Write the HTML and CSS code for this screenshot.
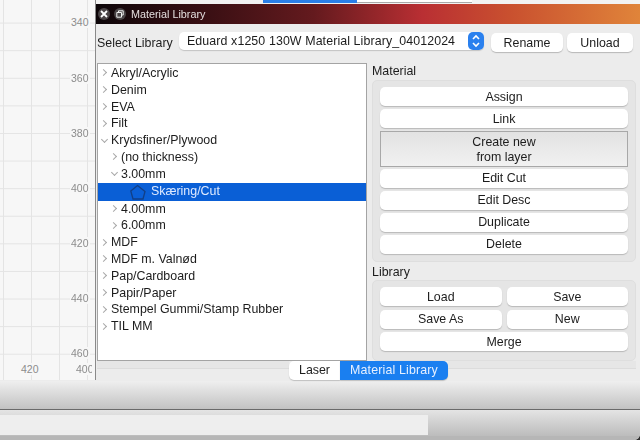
FILE: index.html
```html
<!DOCTYPE html>
<html lang="en">
<head>
    <meta charset="UTF-8">
    <title>Material Library</title>
    <link rel="stylesheet" href="styles.css">
</head>
<body>
    <div class="topstrip">
        <span class="toptab-blue"></span>
        <span class="toptab-white"></span>
    </div>

    <div class="main">
        <div class="canvas">
            <span class="rule-y" style="top:16px">340</span>
            <span class="rule-y" style="top:72px">360</span>
            <span class="rule-y" style="top:127px">380</span>
            <span class="rule-y" style="top:182px">400</span>
            <span class="rule-y" style="top:237px">420</span>
            <span class="rule-y" style="top:292px">440</span>
            <span class="rule-y" style="top:347px">460</span>
            <span class="rule-x" style="left:20px">420</span>
            <span class="rule-x rule-clip" style="left:75px">400</span>
        </div>

        <div class="window">
            <div class="titlebar">
                <span class="winbtn">
                    <svg width="8" height="8" viewBox="0 0 8 8"><path d="M1 1L7 7M7 1L1 7" stroke="#fff" stroke-width="1.8"/></svg>
                </span>
                <span class="winbtn">
                    <svg width="8" height="8" viewBox="0 0 8 8"><path d="M2.5 2V.8H7.2V5H6M.8 2.5H5.5V7.2H.8Z" fill="none" stroke="#eee" stroke-width="1"/></svg>
                </span>
                <span class="wintitle">Material Library</span>
            </div>

            <div class="libbar">
                <span class="liblabel">Select Library</span>
                <div class="select">
                    <span class="select-text">Eduard x1250 130W Material Library_04012024</span>
                    <span class="stepper">
                        <svg width="10" height="14" viewBox="0 0 10 14"><path d="M2 5L5 2L8 5M2 9L5 12L8 9" fill="none" stroke="#fff" stroke-width="1.6"/></svg>
                    </span>
                </div>
                <button class="btn btn-rename">Rename</button>
                <button class="btn btn-unload">Unload</button>
            </div>

            <div class="content">
                <div class="tree">
                    <div class="row"><i class="arrow"></i>Akryl/Acrylic</div>
                    <div class="row"><i class="arrow"></i>Denim</div>
                    <div class="row"><i class="arrow"></i>EVA</div>
                    <div class="row"><i class="arrow"></i>Filt</div>
                    <div class="row"><i class="arrow open"></i>Krydsfiner/Plywood</div>
                    <div class="row sub"><i class="arrow"></i>(no thickness)</div>
                    <div class="row sub"><i class="arrow open"></i>3.00mm</div>
                    <div class="row selected">
                        <svg class="cut-icon" width="16" height="16" viewBox="0 0 16 16"><path d="M7.5 1.5L15 7.5L13 15H3L.8 7Z" fill="none" stroke="#123f86" stroke-width="1.3"/></svg>
                        Skæring/Cut
                    </div>
                    <div class="row sub"><i class="arrow"></i>4.00mm</div>
                    <div class="row sub"><i class="arrow"></i>6.00mm</div>
                    <div class="row"><i class="arrow"></i>MDF</div>
                    <div class="row"><i class="arrow"></i>MDF m. Valnød</div>
                    <div class="row"><i class="arrow"></i>Pap/Cardboard</div>
                    <div class="row"><i class="arrow"></i>Papir/Paper</div>
                    <div class="row"><i class="arrow"></i>Stempel Gummi/Stamp Rubber</div>
                    <div class="row"><i class="arrow"></i>TIL MM</div>
                </div>

                <div class="side">
                    <div class="grouplabel">Material</div>
                    <div class="group group-material">
                        <button class="btn">Assign</button>
                        <button class="btn">Link</button>
                        <button class="btn-flat">Create new<br>from layer</button>
                        <button class="btn">Edit Cut</button>
                        <button class="btn">Edit Desc</button>
                        <button class="btn">Duplicate</button>
                        <button class="btn">Delete</button>
                    </div>
                    <div class="grouplabel grouplabel-lib">Library</div>
                    <div class="group group-library">
                        <button class="btn">Load</button>
                        <button class="btn">Save</button>
                        <button class="btn">Save As</button>
                        <button class="btn">New</button>
                        <button class="btn wide">Merge</button>
                    </div>
                </div>
            </div>

            <div class="tabbar">
                <span class="tabline"></span>
                <span class="tab">Laser</span>
                <span class="tab tab-on">Material Library</span>
                <span class="tabline tabline-right"></span>
            </div>
        </div>
    </div>

    <div class="toolbar"></div>
    <div class="statusbar">
        <div class="statusfield"></div>
    </div>
    <div class="bottomstrip"></div>
</body>
</html>
```

FILE: styles.css
```css
* {
    margin: 0;
    padding: 0;
    box-sizing: border-box;
}
html {
    background: #2e2e2e;
}
html, body {
    width: 640px;
    height: 440px;
    overflow: hidden;
}
body {
    background: #ececec;
    border-bottom-right-radius: 6px;
    font-family: "Liberation Sans", Arial, sans-serif;
    font-size: 12.4px;
    color: #1c1c1c;
    filter: blur(0.35px);
}

.topstrip {
    height: 4px;
    display: flex;
    padding-left: 263px;
    background: #f2f2f2;
}
.toptab-blue {
    width: 94px;
    height: 3px;
    background: #2a7fe8;
}
.toptab-white {
    width: 115px;
    height: 3px;
    background: #fff;
    border-bottom: 1px solid #aaa;
}

.main {
    display: flex;
    height: 376px;
}

/* ruler + grid, labels sit on it */
.canvas {
    position: relative;
    width: 96px;
    margin-top: -4px;
    overflow: hidden;
    border-right: 1px solid #8a8a8a;
    background-color: #f7f7f7;
    background-image:
        linear-gradient(#e4e4e4 1px, transparent 1px),
        linear-gradient(90deg, #e4e4e4 1px, transparent 1px);
    background-size: 100% 27.6px, 28px 100%;
    background-position: 0 -5px, 3px 0;
}
.rule-y, .rule-x {
    position: absolute;
    font-size: 10.5px;
    line-height: 12px;
    color: #8c8c8c;
    background: #f7f7f7;
    padding: 0 1px;
}
.rule-y {
    left: 70px;
}
.rule-x {
    top: 363px;
}
.rule-clip {
    width: 17px;
    overflow: hidden;
}

.window {
    flex: 1;
    display: flex;
    flex-direction: column;
    min-width: 0;
}
.titlebar {
    height: 20px;
    display: flex;
    align-items: center;
    gap: 4px;
    padding-left: 2px;
    background: linear-gradient(90deg, #0c0508 0%, #2c0c10 14%, #641a1e 40%, #b92f33 60%, #c9502f 76%, #e0843a 100%);
}
.winbtn {
    width: 12px;
    height: 12px;
    border-radius: 50%;
    background: #4a4446;
    display: flex;
    align-items: center;
    justify-content: center;
}
.wintitle {
    margin-left: 1px;
    font-size: 10.8px;
    color: #e4dede;
}

.libbar {
    height: 39px;
    display: flex;
    align-items: center;
    padding: 1px 7px 2px 1px;
    border-bottom: 1px solid transparent;
}
.liblabel {
    width: 82px;
    flex: none;
}
.select {
    width: 305px;
    height: 18px;
    margin-bottom: 3px;
    display: flex;
    align-items: center;
    justify-content: space-between;
    padding-left: 8px;
    border-radius: 5px;
    background: #fff;
    box-shadow: 0 1px 1px #c4c4c4;
    flex: none;
}
.select-text {
    letter-spacing: 0.1px;
}
.stepper {
    width: 16px;
    height: 18px;
    border-radius: 5px;
    background: #2a80ee;
    display: flex;
    align-items: center;
    justify-content: center;
}

.btn, .btn-flat {
    font-family: inherit;
    font-size: 12.4px;
    color: #1c1c1c;
    border: 0;
}
.btn {
    height: 19px;
    border-radius: 5px;
    background: #fff;
    box-shadow: 0 1px 1px #b8b8b8;
}
.btn-rename {
    width: 72px;
    margin-left: 7px;
}
.btn-unload {
    width: 66px;
    margin-left: 4px;
}
.btn-flat {
    height: 36px;
    line-height: 15.5px;
    padding-top: 2px;
    margin-bottom: -1.5px;
    border: 1px solid #a8a8a8;
    background: linear-gradient(#e2e2e2, #f1f1f1);
}

.content {
    flex: 1;
    display: flex;
    padding-left: 1px;
    min-height: 0;
}
.tree {
    width: 270px;
    flex: none;
    padding-top: 1px;
    background: #fff;
    border: 1px solid #a4a4a4;
}
.row {
    height: 16.8px;
    line-height: 16.8px;
    display: flex;
    align-items: center;
    padding-left: 13px;
    white-space: nowrap;
}
.row.sub {
    padding-left: 23px;
}
.row.selected {
    height: 18px;
    padding-left: 32px;
    gap: 5px;
    background: #0a5fd6;
    color: #dfeaff;
}
.arrow {
    position: relative;
    flex: none;
    width: 0;
    height: 0;
}
.arrow::before {
    content: "";
    position: absolute;
    left: -10px;
    top: -3px;
    width: 4px;
    height: 4px;
    border-top: 1px solid #a8a8a8;
    border-right: 1px solid #a8a8a8;
    transform: rotate(45deg);
}
.arrow.open::before {
    left: -9px;
    top: -4px;
    transform: rotate(135deg);
}

.side {
    flex: 1;
    display: flex;
    flex-direction: column;
    padding: 1px 4px 0 5px;
}
.grouplabel {
    height: 16px;
    line-height: 14px;
}
.grouplabel-lib {
    height: 15px;
    margin-top: 3px;
}
.group {
    background: #e5e5e5;
    border: 1px solid #dedede;
    border-radius: 5px;
    padding: 6px 7px 0;
}
.group-material {
    height: 182px;
    display: flex;
    flex-direction: column;
    gap: 3px;
}
.group-library {
    height: 81px;
    display: grid;
    grid-template-columns: 1fr 1fr;
    gap: 3.5px 5px;
    align-content: start;
}
.wide {
    grid-column: span 2;
}

.tabbar {
    height: 19px;
    display: flex;
    align-items: flex-start;
    padding-left: 1px;
}
.tabline {
    width: 192px;
    height: 8px;
    border-bottom: 1px solid #dcdcdc;
    background: #e6e6e6;
}
.tabline-right {
    width: 188px;
}
.tab {
    height: 19px;
    line-height: 19px;
    width: 51px;
    text-align: center;
    background: #fff;
    border-radius: 5px 0 0 5px;
    box-shadow: 0 1px 1px #c0c0c0;
}
.tab-on {
    width: 108px;
    letter-spacing: 0.15px;
    background: #1a7ff0;
    color: #e6f0ff;
    border-radius: 0 5px 5px 0;
}

.toolbar {
    height: 29px;
    margin-top: 1px;
    background: linear-gradient(#efefef, #c2c2c2);
    border-bottom: 1px solid #6a6a6a;
}
.statusbar {
    height: 26px;
    padding-top: 5px;
    background: linear-gradient(#e4e4e4, #bcbcbc);
}
.statusfield {
    width: 428px;
    height: 20px;
    background: #eeeeee;
}
.bottomstrip {
    height: 4px;
    background: #b6b6b6;
    border-bottom-right-radius: 6px;
}
```
